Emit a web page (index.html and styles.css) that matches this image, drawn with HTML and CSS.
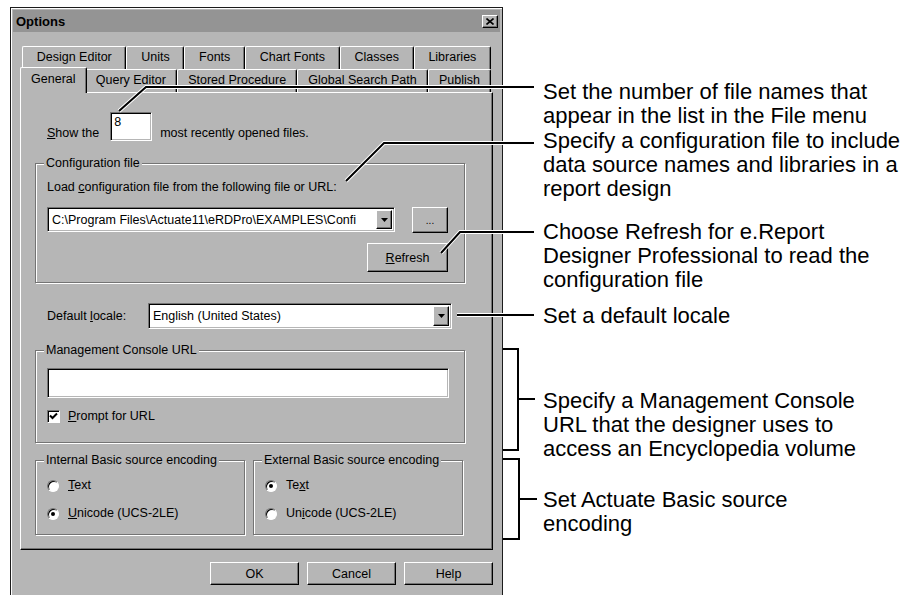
FILE: index.html
```html
<!DOCTYPE html>
<html>

<head>
    <meta charset="utf-8">
    <title>Options</title>
    <meta name="viewport" content="width=device-width, initial-scale=1">
    <link rel="stylesheet" href="styles.css">
</head>

<body>
    <div class="page">
        <div class="dialog">
            <div class="titlebar">
                <span class="title">Options</span>
                <span class="close-btn">
                    <svg width="8" height="7" viewBox="0 0 8 7"><path d="M0.5 0.5 L7.5 6.5 M7.5 0.5 L0.5 6.5" stroke="#000" stroke-width="1.6" fill="none"/></svg>
                </span>
            </div>
            <div class="dialog-body">
                <div class="tabs">
                    <div class="tab-row">
                        <div class="tab">Design Editor</div>
                        <div class="tab">Units</div>
                        <div class="tab">Fonts</div>
                        <div class="tab">Chart Fonts</div>
                        <div class="tab">Classes</div>
                        <div class="tab">Libraries</div>
                    </div>
                    <div class="tab-row">
                        <div class="tab selected">General</div>
                        <div class="tab">Query Editor</div>
                        <div class="tab">Stored Procedure</div>
                        <div class="tab">Global Search Path</div>
                        <div class="tab">Publish</div>
                    </div>
                </div>

                <div class="panel">
                    <div class="recent-row">
                        <span class="lbl"><u>S</u>how the</span>
                        <div class="edit recent-count">8</div>
                        <span class="lbl">most recently opened files.</span>
                    </div>

                    <div class="group config-group">
                        <div class="group-title">Configuration file</div>
                        <div class="lbl load-lbl">Load <u>c</u>onfiguration file from the following file or URL:</div>
                        <div class="config-row">
                            <div class="edit combo config-combo">
                                <span class="combo-text">C:\Program Files\Actuate11\eRDPro\EXAMPLES\Confi</span>
                                <span class="drop-btn"><svg width="7" height="4" viewBox="0 0 7 4"><path d="M0 0 H7 L3.5 4 Z" fill="#000"/></svg></span>
                            </div>
                            <div class="btn browse-btn">...</div>
                        </div>
                        <div class="refresh-row">
                            <div class="btn refresh-btn"><u>R</u>efresh</div>
                        </div>
                    </div>

                    <div class="locale-row">
                        <span class="lbl locale-lbl">Default <u>l</u>ocale:</span>
                        <div class="edit combo locale-combo">
                            <span class="combo-text">English (United States)</span>
                            <span class="drop-btn"><svg width="7" height="4" viewBox="0 0 7 4"><path d="M0 0 H7 L3.5 4 Z" fill="#000"/></svg></span>
                        </div>
                    </div>

                    <div class="group console-group">
                        <div class="group-title">Management Console URL</div>
                        <div class="edit console-url"></div>
                        <div class="check-row">
                            <span class="checkbox">
                                <svg width="9" height="9" viewBox="0 0 9 9"><path d="M1 3.5 L3.5 6 L8 1.5" stroke="#000" stroke-width="2" fill="none"/></svg>
                            </span>
                            <span class="lbl"><u>P</u>rompt for URL</span>
                        </div>
                    </div>

                    <div class="encoding-row">
                        <div class="group enc-group">
                            <div class="group-title">Internal Basic source encoding</div>
                            <div class="radio-row first">
                                <span class="radio"></span>
                                <span class="lbl"><u>T</u>ext</span>
                            </div>
                            <div class="radio-row">
                                <span class="radio checked"></span>
                                <span class="lbl"><u>U</u>nicode (UCS-2LE)</span>
                            </div>
                        </div>
                        <div class="group enc-group">
                            <div class="group-title">External Basic source encoding</div>
                            <div class="radio-row first">
                                <span class="radio checked"></span>
                                <span class="lbl">Te<u>x</u>t</span>
                            </div>
                            <div class="radio-row">
                                <span class="radio"></span>
                                <span class="lbl">Un<u>i</u>code (UCS-2LE)</span>
                            </div>
                        </div>
                    </div>
                </div>

                <div class="button-row">
                    <div class="btn">OK</div>
                    <div class="btn">Cancel</div>
                    <div class="btn">Help</div>
                </div>
            </div>
        </div>

        <div class="notes">
            <p class="note note-recent">Set the number of file names that<br>appear in the list in the File menu</p>
            <p class="note note-config">Specify a configuration file to include<br>data source names and libraries in a<br>report design</p>
            <p class="note note-refresh">Choose Refresh for e.Report<br>Designer Professional to read the<br>configuration file</p>
            <p class="note note-locale">Set a default locale</p>
            <p class="note note-console">Specify a Management Console<br>URL that the designer uses to<br>access an Encyclopedia volume</p>
            <p class="note note-encoding">Set Actuate Basic source<br>encoding</p>
        </div>

        <!-- callout lines drawn over the dialog -->
        <svg class="callouts" width="917" height="595" viewBox="0 0 917 595">
            <g stroke="#fff" stroke-width="4" fill="none">
                <path d="M119 111 L146 87 L534 87"/>
                <path d="M346 181 L384 143 L534 143"/>
                <path d="M441 253 L460 232 L534 232"/>
                <path d="M457 315 L534 315"/>
            </g>
            <g stroke="#000" stroke-width="2" fill="none">
                <path d="M119 111 L146 87 L534 87"/>
                <path d="M346 181 L384 143 L534 143"/>
                <path d="M441 253 L460 232 L534 232"/>
                <path d="M457 315 L534 315"/>
                <path d="M503 349 H518 V450 H503 M518 399 H535"/>
                <path d="M503 459 H519 V539 H503 M519 499 H537"/>
            </g>
        </svg>
    </div>
</body>

</html>
```

FILE: styles.css
```css
body {
    margin: 0;
    background-color: #ffffff;
    font-family: 'Liberation Sans', Arial, sans-serif;
    color: black;
}

.page {
    position: relative;
    width: 917px;
    height: 595px;
    overflow: hidden;
    display: flex;
    align-items: flex-start;
}

/* dialog frame */
.dialog {
    box-sizing: border-box;
    flex: none;
    width: 493px;
    height: 600px;
    margin: 7px 0 0 10px;
    padding: 2px;
    background-color: #b6b6b6;
    border: 1px solid #1c1c1c;
    box-shadow: inset 1px 1px #ffffff;
    font-size: 12.5px;
}

.titlebar {
    height: 22px;
    display: flex;
    align-items: center;
    justify-content: space-between;
    padding: 0 2px 0 3px;
    background-color: #949494;
}

.title {
    font-weight: bold;
    font-size: 13px;
}

.close-btn {
    box-sizing: border-box;
    width: 16px;
    height: 13px;
    display: flex;
    align-items: center;
    justify-content: center;
    background-color: #b6b6b6;
    border: 1px solid;
    border-color: #ffffff #000000 #000000 #ffffff;
    box-shadow: inset -1px -1px #747474;
}

.dialog-body {
    padding: 14px 7px 0 7px;
}

/* tabs */
.tab-row {
    display: flex;
    height: 23px;
    margin: 0 2px;
}

.tab {
    box-sizing: border-box;
    flex: 1 1 auto;
    height: 23px;
    line-height: 21px;
    text-align: center;
    white-space: nowrap;
    background-color: #b6b6b6;
    border-top: 1px solid #ffffff;
    border-left: 1px solid #ffffff;
    border-right: 1px solid #000000;
    border-radius: 2px 2px 0 0;
    box-shadow: inset -1px 0 #747474;
}

.tab.selected {
    position: relative;
    z-index: 1;
    height: 26px;
    margin: -2px -2px -1px -2px;
    line-height: 23px;
}

.panel {
    box-sizing: border-box;
    height: 458px;
    padding: 19px 0 0 14px;
    border: 1px solid;
    border-color: #ffffff #000000 #000000 #ffffff;
    box-shadow: inset -1px -1px #747474;
}

.lbl {
    line-height: 15px;
    white-space: nowrap;
}

u {
    text-decoration-thickness: 1px;
    text-underline-offset: 1px;
}

/* sunken fields */
.edit {
    box-sizing: border-box;
    background-color: #ffffff;
    border: 1px solid;
    border-color: #747474 #ffffff #ffffff #747474;
    box-shadow: inset 1px 1px #000000, inset -1px -1px #b6b6b6;
}

.recent-row {
    display: flex;
    align-items: flex-end;
    margin-left: 12px;
}

.recent-count {
    width: 42px;
    height: 29px;
    margin: 0 8px 0 11px;
    padding: 2px 3px;
    line-height: 14px;
}

/* group boxes */
.group {
    box-sizing: border-box;
    border: 1px solid #747474;
    box-shadow: inset 1px 1px #ffffff, 1px 1px #ffffff;
    padding: 0 16px 10px 11px;
}

.group-title {
    display: table;
    margin: -8px 0 0 -3px;
    padding: 0 2px;
    line-height: 15px;
    background-color: #b6b6b6;
}

.config-group {
    width: 430px;
    margin-top: 22px;
}

.load-lbl {
    margin-top: 9px;
}

.config-row {
    display: flex;
    margin-top: 12px;
}

.combo {
    display: flex;
    align-items: center;
    padding: 2px;
}

.combo-text {
    flex: 1;
    white-space: nowrap;
    padding-left: 2px;
}

.drop-btn {
    box-sizing: border-box;
    flex: none;
    width: 16px;
    height: 100%;
    display: flex;
    align-items: center;
    justify-content: center;
    background-color: #b6b6b6;
    border: 1px solid;
    border-color: #ffffff #000000 #000000 #ffffff;
    box-shadow: inset -1px -1px #747474;
}

.config-combo {
    width: 348px;
    height: 25px;
}

.btn {
    box-sizing: border-box;
    display: flex;
    align-items: center;
    justify-content: center;
    width: 89px;
    height: 23px;
    background-color: #b6b6b6;
    border: 1px solid;
    border-color: #ffffff #000000 #000000 #ffffff;
    box-shadow: inset -1px -1px #747474;
}

.browse-btn {
    width: 36px;
    height: 26px;
    margin-left: 17px;
    font-size: 10px;
}

.refresh-row {
    display: flex;
    justify-content: flex-end;
    margin-top: 10px;
}

.refresh-btn {
    width: 81px;
    height: 29px;
}

.locale-row {
    display: flex;
    align-items: center;
    margin: 20px 0 0 12px;
}

.locale-lbl {
    width: 101px;
}

.locale-combo {
    width: 304px;
    height: 26px;
}

.console-group {
    width: 430px;
    margin-top: 21px;
    padding-bottom: 18px;
}

.console-url {
    width: 402px;
    height: 30px;
    margin-top: 10px;
}

.check-row {
    display: flex;
    align-items: center;
    margin-top: 11px;
}

.checkbox {
    box-sizing: border-box;
    width: 13px;
    height: 13px;
    margin-right: 8px;
    display: flex;
    align-items: center;
    justify-content: center;
    background-color: #ffffff;
    border: 1px solid;
    border-color: #747474 #ffffff #ffffff #747474;
    box-shadow: inset 1px 1px #000000;
}

.encoding-row {
    display: flex;
    gap: 8px;
    margin-top: 17px;
}

.enc-group {
    width: 210px;
    padding-bottom: 13px;
}

.radio-row {
    display: flex;
    align-items: center;
    margin-top: 13px;
}

.radio-row.first {
    margin-top: 10px;
}

.radio {
    box-sizing: border-box;
    width: 12px;
    height: 12px;
    margin-right: 9px;
    display: flex;
    align-items: center;
    justify-content: center;
    border-radius: 50%;
    background-color: #ffffff;
    border: 1px solid;
    border-color: #747474 #ffffff #ffffff #747474;
    box-shadow: inset 1px 1px #000000;
}

.radio.checked::after {
    content: "";
    width: 4px;
    height: 4px;
    border-radius: 50%;
    background-color: #000000;
}

.button-row {
    display: flex;
    justify-content: flex-end;
    gap: 8px;
    margin-top: 12px;
}

/* annotations */
.notes {
    margin-left: 40px;
    font-size: 22px;
    line-height: 24px;
}

.note {
    margin: 0;
    white-space: nowrap;
}

.note-recent { margin-top: 80px; }
.note-config { margin-top: 1px; }
.note-refresh { margin-top: 19px; }
.note-locale { margin-top: 12px; }
.note-console { margin-top: 61px; }
.note-encoding { margin-top: 27px; }

.callouts {
    position: absolute;
    left: 0;
    top: 0;
    pointer-events: none;
}
```
